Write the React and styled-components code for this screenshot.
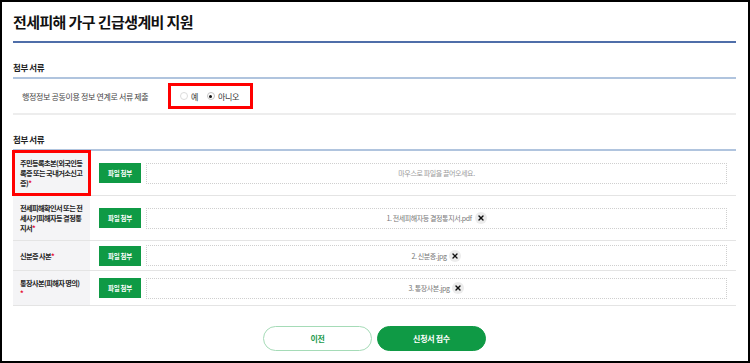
import React from 'react';
import styled, { createGlobalStyle } from 'styled-components';
import { X } from 'lucide-react';

const GlobalStyle = createGlobalStyle`
    html, body {
        margin: 0;
        padding: 0;
        background: #fff;
    }
    body {
        font-family: "Noto Sans CJK KR", "Noto Sans", sans-serif;
        color: #222;
    }
`

const Frame = styled.div`
    box-sizing: border-box;
    width: 750px;
    height: 363px;
    border: 2px solid #000;
    padding: 0 12px 0 11px;
    display: flex;
    flex-direction: column;
    overflow: hidden;
`

const Title = styled.h1`
    margin: 0;
    height: 39px;
    display: flex;
    align-items: center;
    font-size: 15px;
    font-weight: 700;
    letter-spacing: -0.6px;
    color: #111;
    border-bottom: 2px solid #4f6ea9;
`

const SectionHead = styled.h2`
    margin: 0;
    box-sizing: border-box;
    height: 36px;
    padding: 18px 0 4px;
    font-size: 8.5px;
    line-height: 12px;
    font-weight: 700;
    letter-spacing: -0.4px;
    color: #222;
    border-bottom: 2px solid #b0c4de;
`

const ConsentRow = styled.div`
    display: flex;
    align-items: center;
    height: 34px;
    padding-left: 9px;
    border-bottom: 2px solid #ededed;
`

const ConsentText = styled.span`
    font-size: 8px;
    letter-spacing: -0.35px;
    color: #444;
    width: 146px;
    white-space: nowrap;
`

const RadioGroup = styled.div`
    box-sizing: border-box;
    width: 85px;
    height: 26px;
    border: 3px solid #ff0000;
    padding-left: 9px;
    display: flex;
    align-items: center;
    gap: 9px;
`

const RadioItem = styled.label`
    display: flex;
    align-items: center;
    gap: 3px;
    font-size: 8px;
    letter-spacing: -0.4px;
    color: #333;
`

const RadioDot = styled.span`
    box-sizing: border-box;
    width: 8px;
    height: 8px;
    border-radius: 50%;
    border: 1px solid ${p => (p.$checked ? '#c4c4c4' : '#dcdcdc')};
    display: flex;
    align-items: center;
    justify-content: center;

    &::after {
        content: '';
        width: 3px;
        height: 3px;
        border-radius: 50%;
        background: ${p => (p.$checked ? '#111' : 'transparent')};
    }
`

const Table = styled.div`
    display: flex;
    flex-direction: column;
`

const FileRow = styled.div`
    display: grid;
    grid-template-columns: 77px 1fr;
    border-bottom: 1px solid #e4e4e4;
`

const LabelCell = styled.div`
    background: #f4f4f6;
    padding: 7px 0 7px 7px;
    display: flex;
    flex-direction: column;
    justify-content: center;
    font-size: 7.2px;
    line-height: 10px;
    font-weight: 700;
    letter-spacing: -0.6px;
    white-space: nowrap;
    color: #222;
    outline: ${p => (p.$marked ? '3px solid #ff0000' : 'none')};
    outline-offset: -2px;
`

const Required = styled.span`
    color: #e4002b;
`

const UploadCell = styled.div`
    display: flex;
    align-items: center;
    gap: 5px;
    padding: 4px 9px;
`

const AttachButton = styled.button`
    flex: none;
    width: 42px;
    height: 20px;
    border: none;
    padding: 0;
    background: #0f9a45;
    color: #fff;
    font-family: inherit;
    font-size: 6.5px;
    font-weight: 700;
    letter-spacing: -0.3px;
`

const DropZone = styled.div`
    flex: 1;
    box-sizing: border-box;
    height: 21px;
    border: 1px dotted #cfcfcf;
    display: flex;
    align-items: center;
    justify-content: center;
    gap: 3px;
    font-size: 7px;
    letter-spacing: -0.4px;
    color: ${p => (p.$empty ? '#9a9a9a' : '#777')};
`

const RemoveBadge = styled.span`
    width: 12px;
    height: 12px;
    border-radius: 50%;
    background: #ececec;
    display: flex;
    align-items: center;
    justify-content: center;
    color: #111;
`

const Actions = styled.div`
    display: flex;
    justify-content: center;
    gap: 5px;
    padding-top: 20px;
`

const ActionButton = styled.button`
    box-sizing: border-box;
    width: 109px;
    height: 25px;
    border-radius: 13px;
    font-family: inherit;
    font-size: 8px;
    font-weight: 700;
    letter-spacing: -0.3px;
    border: 1.5px solid ${p => (p.$primary ? '#0f9a45' : '#a5dbb7')};
    background: ${p => (p.$primary ? '#0f9a45' : '#fff')};
    color: ${p => (p.$primary ? '#fff' : '#1b9a4b')};
`

const files = [
    { lines: ['주민등록초본(외국인등', '록증 또는 국내거소신고', '증)'], file: null, marked: true },
    { lines: ['전세피해확인서 또는 전', '세사기피해자등 결정통', '지서'], file: '1. 전세피해자등 결정통지서.pdf' },
    { lines: ['신분증 사본'], file: '2. 신분증.jpg' },
    { lines: ['통장사본(피해자 명의)', ''], file: '3. 통장사본.jpg' },
]

const App = () => {
    return (
        <>
            <GlobalStyle />
            <Frame>
                <Title>전세피해 가구 긴급생계비 지원</Title>

                <SectionHead>첨부 서류</SectionHead>
                <ConsentRow>
                    <ConsentText>행정정보 공동이용 정보 연계로 서류 제출</ConsentText>
                    <RadioGroup>
                        <RadioItem><RadioDot />예</RadioItem>
                        <RadioItem><RadioDot $checked />아니오</RadioItem>
                    </RadioGroup>
                </ConsentRow>

                <SectionHead>첨부 서류</SectionHead>
                <Table>
                    {files.map((row, i) => (
                        <FileRow key={i}>
                            <LabelCell $marked={row.marked}>
                                {row.lines.map((line, j) => (
                                    <div key={j}>
                                        {line}
                                        {j === row.lines.length - 1 && <Required>*</Required>}
                                    </div>
                                ))}
                            </LabelCell>
                            <UploadCell>
                                <AttachButton type='button'>파일 첨부</AttachButton>
                                {row.file ? (
                                    <DropZone>
                                        {row.file}
                                        <RemoveBadge><X size={8} strokeWidth={4} /></RemoveBadge>
                                    </DropZone>
                                ) : (
                                    <DropZone $empty>마우스로 파일을 끌어오세요.</DropZone>
                                )}
                            </UploadCell>
                        </FileRow>
                    ))}
                </Table>

                <Actions>
                    <ActionButton type='button'>이전</ActionButton>
                    <ActionButton type='button' $primary>신청서 접수</ActionButton>
                </Actions>
            </Frame>
        </>
    );
};

export default App
